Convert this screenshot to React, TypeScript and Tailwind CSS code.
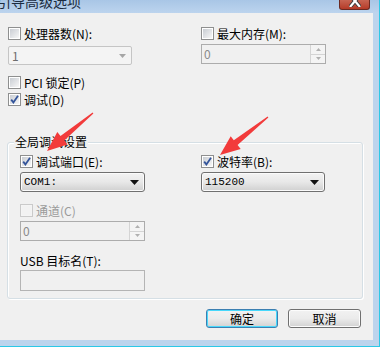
import React from 'react'

// Win7 style "引导高级选项" dialog (msconfig)

const Check: React.FC<{ checked?: boolean; disabled?: boolean }> = ({ checked, disabled }) => (
  <span
    className={`relative flex h-[13px] w-[13px] shrink-0 items-center justify-center border ${
      disabled ? 'border-[#cacaca] bg-[#f4f4f4]' : 'border-[#8e8f8f] bg-white'
    }`}
  >
    <span
      className={`h-[9px] w-[9px] ${
        disabled ? 'bg-[#f2f2f2]' : 'bg-linear-to-br from-[#c9cdd3] to-[#f7f7f7]'
      }`}
    />
    {checked && (
      <svg className="absolute left-0 top-0" width="11" height="11" viewBox="0 0 11 11">
        <path d="M2.2 5.6 L4.4 8.4 L9 1.8" fill="none" stroke="#33549a" strokeWidth="1.8" />
      </svg>
    )}
  </span>
)

const CheckRow: React.FC<{ label: string; checked?: boolean; disabled?: boolean }> = ({ label, checked, disabled }) => (
  <div className="flex h-[13px] items-center gap-[3px]">
    <Check checked={checked} disabled={disabled} />
    <span className={`whitespace-nowrap text-[12px] leading-[13px] ${disabled ? 'text-[#9a9a9a]' : 'text-black'}`}>
      {label}
    </span>
  </div>
)

const Arrow: React.FC<{ color: string; small?: boolean }> = ({ color, small }) => (
  <svg width={small ? 7 : 9} height={small ? 4 : 5} viewBox="0 0 9 5">
    <path d="M0 0 H9 L4.5 5 Z" fill={color} />
  </svg>
)

const Combo: React.FC<{ value: string; disabled?: boolean; w: string }> = ({ value, disabled, w }) =>
  disabled ? (
    <div className={`flex h-[19px] ${w} items-center justify-between rounded-[2px] border border-[#c5c5c5] bg-[#f4f4f4] pl-[3px] pr-[5px]`}>
      <span className="text-[12px] leading-[13px] text-[#6d6d6d]">{value}</span>
      <Arrow color="#a6a6a6" small />
    </div>
  ) : (
    <div className={`flex h-[20px] ${w} items-center justify-between rounded-[3px] border border-[#707070] bg-linear-to-b from-[#f3f3f3] via-[#e8e8e8] to-[#d0d0d0] pl-[3px] pr-[5px] shadow-[inset_0_0_0_1px_#fbfbfb]`}>
      <span className="font-['Liberation_Mono',monospace] text-[11px] leading-[13px] text-black">{value}</span>
      <Arrow color="#111" />
    </div>
  )

const Spinner: React.FC<{ w: string; h: string }> = ({ w, h }) => (
  <div className={`flex ${h} ${w} items-stretch border border-[#acacac] bg-[#f0f0f0]`}>
    <span className="flex-1 pl-[2px] text-[12px] leading-[17px] text-[#8a8a8a]">0</span>
    <div className="flex w-[15px] flex-col border-l border-[#d4d4d4]">
      <div className="flex flex-1 items-center justify-center border-b border-[#d4d4d4] bg-[#f4f4f4]">
        <svg width="5" height="3" viewBox="0 0 5 3"><path d="M0 3 H5 L2.5 0 Z" fill="#b0b0b0" /></svg>
      </div>
      <div className="flex flex-1 items-center justify-center bg-[#f4f4f4]">
        <svg width="5" height="3" viewBox="0 0 5 3"><path d="M0 0 H5 L2.5 3 Z" fill="#b0b0b0" /></svg>
      </div>
    </div>
  </div>
)

const Button: React.FC<{ label: string; focused?: boolean; w: string }> = ({ label, focused, w }) => (
  <div
    className={`flex h-[19px] ${w} items-center justify-center rounded-[3px] border bg-linear-to-b from-[#f2f2f2] via-[#ebebeb] to-[#d2d2d2] text-[12px] leading-[13px] text-black ${
      focused ? 'border-[#3c7fb1] shadow-[inset_0_0_0_1px_#48d8fb]' : 'border-[#707070] shadow-[inset_0_0_0_1px_#fcfcfc]'
    }`}
  >
    {label}
  </div>
)

export default function App() {
  return (
    <div className="relative flex h-[347px] w-[380px] flex-col overflow-hidden border-b border-r border-[#2cc8e6] bg-[#bcd4ed] font-['Noto_Sans_CJK_SC',sans-serif]">
      {/* title bar */}
      <div className="flex h-[13px] shrink-0 items-start justify-between bg-linear-to-b from-[#a9c6e6] to-[#bcd4ee]">
        <span className="-ml-[3px] -mt-[6px] whitespace-nowrap text-[14px] leading-[15px] text-[#1b2c40]">引导高级选项</span>
        <div className="mr-[9px] flex h-[10px] w-[31px] items-end justify-center overflow-hidden rounded-b-[3px] border border-t-0 border-[#6b2a22] bg-linear-to-b from-[#c76452] to-[#b53a27]">
          <svg width="12" height="9" viewBox="0 0 12 9" className="mb-[2px]">
            <path d="M1 -3 L11 9 M11 -3 L1 9" stroke="#3b3b3b" strokeWidth="4" />
            <path d="M1 -3 L11 9 M11 -3 L1 9" stroke="#ffffff" strokeWidth="2.2" />
          </svg>
        </div>
      </div>

      {/* body */}
      <div className="flex h-[327px] w-[373px] shrink-0 flex-col bg-[#f0f0f0] pl-[7px] pt-[14px]">
        <div className="flex">
          <div className="flex w-[193px] flex-col pl-[1px]">
            <CheckRow label="处理器数(N):" />
            <div className="mt-[6px]">
              <Combo value="1" disabled w="w-[124px]" />
            </div>
          </div>
          <div className="flex flex-col pl-[1px]">
            <CheckRow label="最大内存(M):" />
            <div className="mt-[4px]">
              <Spinner w="w-[125px]" h="h-[20px]" />
            </div>
          </div>
        </div>

        <div className="mt-[11px] pl-[1px]">
          <CheckRow label="PCI 锁定(P)" />
        </div>
        <div className="mt-[4px] pl-[1px]">
          <CheckRow label="调试(D)" checked />
        </div>

        {/* group box */}
        <div className="relative mt-[36px] h-[157px] w-[356px] rounded-[3px] border border-[#d5dfe5] pl-[12px] pt-[12px] shadow-[inset_1px_1px_0_#ffffff,1px_1px_0_#ffffff]">
          <span className="absolute -top-[8px] left-[6px] bg-[#f0f0f0] px-[1px] text-[12px] leading-[13px] text-black">
            全局调试设置
          </span>
          <div className="flex">
            <div className="flex w-[180px] flex-col">
              <CheckRow label="调试端口(E):" checked />
              <div className="mt-[4px]">
                <Combo value="COM1:" w="w-[125px]" />
              </div>
              <div className="mt-[12px]">
                <CheckRow label="通道(C)" disabled />
              </div>
              <div className="mt-[4px]">
                <Spinner w="w-[125px]" h="h-[20px]" />
              </div>
              <div className="mt-[13px] flex h-[13px] items-center whitespace-nowrap text-[12px] leading-[13px] text-black">
                USB 目标名(T):
              </div>
              <div className="mt-[3px] h-[21px] w-[125px] border border-[#b4b4b4] bg-[#f0f0f0]" />
            </div>
            <div className="flex flex-col pl-[1px]">
              <CheckRow label="波特率(B):" checked />
              <div className="mt-[4px]">
                <Combo value="115200" w="w-[124px]" />
              </div>
            </div>
          </div>
        </div>

        {/* buttons */}
        <div className="mt-[10px] flex justify-end gap-[10px] pr-[12px]">
          <Button label="确定" focused w="w-[72px]" />
          <Button label="取消" w="w-[73px]" />
        </div>
      </div>

      {/* red annotation arrows */}
      <svg className="pointer-events-none absolute left-0 top-0" width="380" height="347" viewBox="0 0 380 347">
        <polygon
          points="93.4,113.5 64.3,140.6 67.5,144.5 47,151 57.3,132.1 60.5,136 92.6,112.5"
          fill="#f23b3b"
        />
        <polygon
          points="268.4,117.5 237.6,145 240.7,148.9 220,155 230.7,136.3 233.8,140.2 267.6,116.5"
          fill="#f23b3b"
        />
      </svg>
    </div>
  )
}
